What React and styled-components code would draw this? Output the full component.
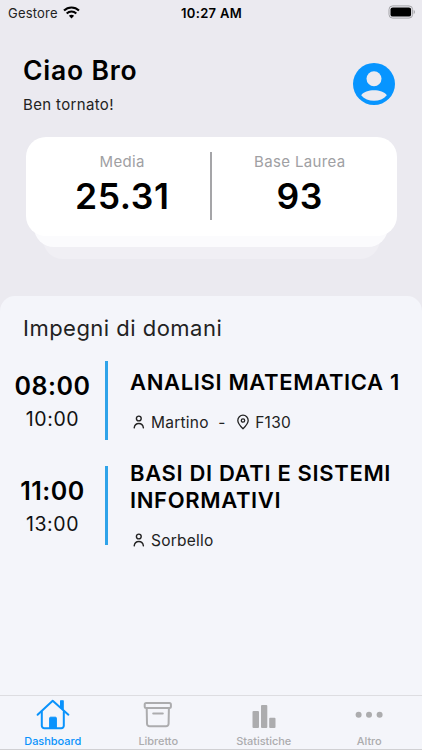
import React from 'react';
import styled, { createGlobalStyle } from 'styled-components';

const GlobalStyle = createGlobalStyle`
    * {
        box-sizing: border-box;
    }
    body {
        margin: 0;
        background: #ebeaf0;
        font-family: Inter, "Liberation Sans", sans-serif;
        color: #000;
    }
    h1, h2, h3, p {
        margin: 0;
    }
    svg {
        display: block;
        flex-shrink: 0;
    }
`;

const Screen = styled.div`
    display: flex;
    flex-direction: column;
    width: 422px;
    height: 750px;
    overflow: hidden;
    background: #ebeaf0;
    white-space: nowrap;
`;

const StatusBar = styled.div`
    display: grid;
    grid-template-columns: 1fr auto 1fr;
    align-items: center;
    height: 25px;
    padding: 0 7px 0 8px;
    font-size: 13px;
    .carrier {
        display: flex;
        align-items: center;
        gap: 5px;
        letter-spacing: 0.2px;
        color: #222;
    }
    .time {
        font-weight: 600;
        letter-spacing: 0.3px;
    }
    .battery {
        justify-self: end;
        margin-bottom: 1px;
    }
`;

const Header = styled.header`
    display: flex;
    justify-content: space-between;
    height: 111.5px;
    padding: 29px 27.5px 0 23px;
    h1 {
        font-size: 26.5px;
        font-weight: 600;
        line-height: 33px;
        letter-spacing: 0.8px;
    }
    p {
        margin-top: 8px;
        font-size: 15px;
        line-height: 20px;
        letter-spacing: 0.35px;
        color: #222;
    }
    .avatar {
        margin-top: 9px;
    }
`;

const CardStack = styled.div`
    display: flex;
    flex-direction: column;
    align-items: center;
    height: 159.5px;
`;

const Card = styled.div`
    position: relative;
    z-index: 2;
    display: grid;
    grid-template-columns: 1fr 2px 1fr;
    width: 371px;
    height: 99px;
    padding-top: 15.5px;
    border-radius: 20px;
    background: #fff;
`;

const CardLayer = styled.div`
    position: relative;
    z-index: ${({ $z }) => $z};
    width: ${({ $width }) => $width}px;
    height: 32px;
    margin-top: -20.5px;
    border-radius: 0 0 20px 20px;
    background: ${({ $color }) => $color};
`;

const Divider = styled.div`
    height: 68px;
    background: #a5a5a8;
`;

const Stat = styled.div`
    padding: ${({ $right }) => ($right ? '0 9px 0 0' : '0 0 0 9px')};
    text-align: center;
    .label {
        font-size: 15px;
        line-height: 20px;
        letter-spacing: 0.35px;
        color: #a0a0a3;
    }
    .value {
        margin-top: 5px;
        font-size: 35.5px;
        font-weight: 600;
        line-height: 40px;
        letter-spacing: 0.6px;
    }
`;

const Sheet = styled.main`
    flex: 1;
    border-radius: 15px 15px 0 0;
    background: #f4f5fa;
    h2 {
        padding: 19px 0 0 23px;
        font-size: 22px;
        font-weight: 400;
        line-height: 26px;
        letter-spacing: 0.48px;
        color: #222;
    }
`;

const EventList = styled.div`
    display: flex;
    flex-direction: column;
    gap: 25.5px;
    padding-top: 20px;
`;

const EventRow = styled.div`
    display: grid;
    grid-template-columns: 105px 2.5px 1fr;
    grid-template-rows: 79px;
    height: 79px;
`;

const Times = styled.div`
    padding-top: 10px;
    text-align: center;
    .start {
        font-size: 25px;
        font-weight: 600;
        line-height: 30px;
        letter-spacing: 0.5px;
    }
    .end {
        margin-top: 6px;
        font-size: 19.5px;
        line-height: 25px;
        letter-spacing: 0.6px;
        color: #111;
    }
`;

const Bar = styled.div`
    background: #2fa3e9;
`;

const Lesson = styled.div`
    align-self: center;
    padding-left: 22.5px;
    h3 {
        font-size: 22px;
        font-weight: 600;
        line-height: 27px;
        letter-spacing: 0.65px;
        white-space: pre-line;
    }
`;

const Meta = styled.div`
    display: flex;
    align-items: center;
    height: 20px;
    margin-top: 16px;
    padding-left: 3px;
    font-size: 15.5px;
    letter-spacing: 0.25px;
    color: #222;
    span {
        margin-left: 6px;
    }
    .dash {
        margin: 0 11.5px 0 9.5px;
    }
`;

const TabBar = styled.nav`
    display: grid;
    grid-template-columns: repeat(4, 1fr);
    height: 55px;
    border-top: 1px solid #dddde1;
    border-bottom: 1px solid #d0d0d3;
    background: #f4f5fa;
`;

const Tab = styled.div`
    display: flex;
    flex-direction: column;
    align-items: center;
    padding-top: 3px;
    font-size: 11px;
    font-weight: 500;
    line-height: 14px;
    letter-spacing: -0.05px;
    color: ${({ $active }) => ($active ? '#0a93fc' : '#acacae')};
    svg {
        margin-bottom: 1px;
    }
`;

const WifiIcon = () => (
    <svg width="17" height="13" viewBox="0 0 17 13" fill="none" stroke="#000" strokeWidth="2.1">
        <path d="M1 4.6C5.2 0.5 11.8 0.5 16 4.6" />
        <path d="M3.7 7.4C6.4 4.8 10.6 4.8 13.3 7.4" />
        <path d="M8.5 12.4L5.9 9.7C7.3 8.4 9.7 8.4 11.1 9.7Z" fill="#000" stroke="none" />
    </svg>
);

const BatteryIcon = () => (
    <svg className="battery" width="27" height="14" viewBox="0 0 27 14">
        <rect x="1" y="0.9" width="23.6" height="12.2" rx="3.6" fill="none" stroke="#a4a4a8" />
        <rect x="2.5" y="2.4" width="20.6" height="9.2" rx="2.2" fill="#000" />
        <path d="M25.7 5v4c.7-.3 1.2-1.1 1.2-2s-.5-1.7-1.2-2z" fill="#a4a4a8" />
    </svg>
);

const AvatarIcon = () => (
    <svg className="avatar" width="42" height="42" viewBox="0 0 42 42">
        <circle cx="21" cy="21" r="21" fill="#0795ff" />
        <circle cx="21" cy="15.7" r="7.5" fill="#ebeaf0" />
        <path d="M8.2 32.3C12.5 25.7 29.5 25.7 33.8 32.3C28 39.7 14 39.7 8.2 32.3Z" fill="#ebeaf0" />
    </svg>
);

const PersonIcon = () => (
    <svg width="12" height="14" viewBox="0 0 12 14" fill="none" stroke="#222" strokeWidth="1.4" strokeLinecap="round">
        <circle cx="5.8" cy="3.5" r="2.4" />
        <path d="M1.2 12.8C1.6 10 3.3 8.5 5.8 8.5S10 10 10.4 12.8" />
    </svg>
);

const PinIcon = () => (
    <svg width="12" height="16" viewBox="0 0 12 16" fill="none" stroke="#222" strokeWidth="1.3">
        <path d="M6 14.7C3.5 12.2 0.8 9.5 0.8 6.4a5.2 5.2 0 0 1 10.4 0C11.2 9.5 8.5 12.2 6 14.7Z" />
        <circle cx="6" cy="6.5" r="1.7" />
    </svg>
);

const HomeIcon = () => (
    <svg width="34" height="34" viewBox="0 0 34 34" fill="none" stroke="currentColor" strokeWidth="2" strokeLinecap="round" strokeLinejoin="round">
        <path d="M1.6 15.7L16.7 1.7L32.4 15.7" />
        <path d="M5.8 12.8V26.8a2.5 2.5 0 0 0 2.5 2.5H25.3a2.5 2.5 0 0 0 2.5-2.5V12.8" />
        <path d="M24.6 1.8h2.6v8.5l-2.6-2.3z" fill="currentColor" strokeWidth="1.2" />
        <path d="M13.6 29V19.2a1 1 0 0 1 1-1h4.8a1 1 0 0 1 1 1V29z" fill="currentColor" strokeWidth="1" />
    </svg>
);

const ArchiveIcon = () => (
    <svg width="30" height="34" viewBox="0 0 30 34" fill="none" stroke="currentColor" strokeWidth="2" strokeLinecap="round" strokeLinejoin="round">
        <rect x="1.7" y="4" width="26.2" height="5" rx="1.5" />
        <path d="M3.7 9l.3 15.8a2.7 2.7 0 0 0 2.7 2.5h16.2a2.7 2.7 0 0 0 2.7-2.5l.3-15.8" />
        <path d="M10.2 14.6h9.6" />
    </svg>
);

const StatsIcon = () => (
    <svg width="24" height="34" viewBox="0 0 24 34" fill="currentColor">
        <rect x="0.5" y="12" width="6.5" height="17" rx="1" />
        <rect x="9" y="6" width="6.3" height="23" rx="1" />
        <rect x="17.2" y="18.8" width="6.3" height="10.2" rx="1" />
    </svg>
);

const MoreIcon = () => (
    <svg width="28" height="34" viewBox="0 0 28 34" fill="currentColor">
        <circle cx="3.6" cy="15.8" r="3" />
        <circle cx="14" cy="15.8" r="3" />
        <circle cx="24.6" cy="15.8" r="3" />
    </svg>
);

const events = [
    { id: 1, start: '08:00', end: '10:00', title: 'ANALISI MATEMATICA 1', teacher: 'Martino', room: 'F130' },
    { id: 2, start: '11:00', end: '13:00', title: 'BASI DI DATI E SISTEMI\nINFORMATIVI', teacher: 'Sorbello' },
];

const tabs = [
    { name: 'Dashboard', icon: <HomeIcon />, active: true },
    { name: 'Libretto', icon: <ArchiveIcon /> },
    { name: 'Statistiche', icon: <StatsIcon /> },
    { name: 'Altro', icon: <MoreIcon /> },
];

function EventItem({ item }) {
    const { start, end, title, teacher, room } = item;

    return (
        <EventRow>
            <Times>
                <p className="start">{start}</p>
                <p className="end">{end}</p>
            </Times>
            <Bar />
            <Lesson>
                <h3>{title}</h3>
                <Meta>
                    <PersonIcon />
                    <span>{teacher}</span>
                    {room && (
                        <>
                            <span className="dash">-</span>
                            <PinIcon />
                            <span>{room}</span>
                        </>
                    )}
                </Meta>
            </Lesson>
        </EventRow>
    );
}

function App() {
    return (
        <>
            <GlobalStyle />
            <Screen>
                <StatusBar>
                    <div className="carrier">Gestore <WifiIcon /></div>
                    <div className="time">10:27 AM</div>
                    <BatteryIcon />
                </StatusBar>
                <Header>
                    <div>
                        <h1>Ciao Bro</h1>
                        <p>Ben tornato!</p>
                    </div>
                    <AvatarIcon />
                </Header>
                <CardStack>
                    <Card>
                        <Stat>
                            <p className="label">Media</p>
                            <p className="value">25.31</p>
                        </Stat>
                        <Divider />
                        <Stat $right>
                            <p className="label">Base Laurea</p>
                            <p className="value">93</p>
                        </Stat>
                    </Card>
                    <CardLayer $z={1} $width={354} $color="#fbfbfd" />
                    <CardLayer $z={0} $width={337} $color="#f0eff4" />
                </CardStack>
                <Sheet>
                    <h2>Impegni di domani</h2>
                    <EventList>
                        {events.map((item) => (
                            <EventItem key={item.id} item={item} />
                        ))}
                    </EventList>
                </Sheet>
                <TabBar>
                    {tabs.map((tab) => (
                        <Tab key={tab.name} $active={tab.active}>
                            {tab.icon}
                            {tab.name}
                        </Tab>
                    ))}
                </TabBar>
            </Screen>
        </>
    );
}

export default App;
